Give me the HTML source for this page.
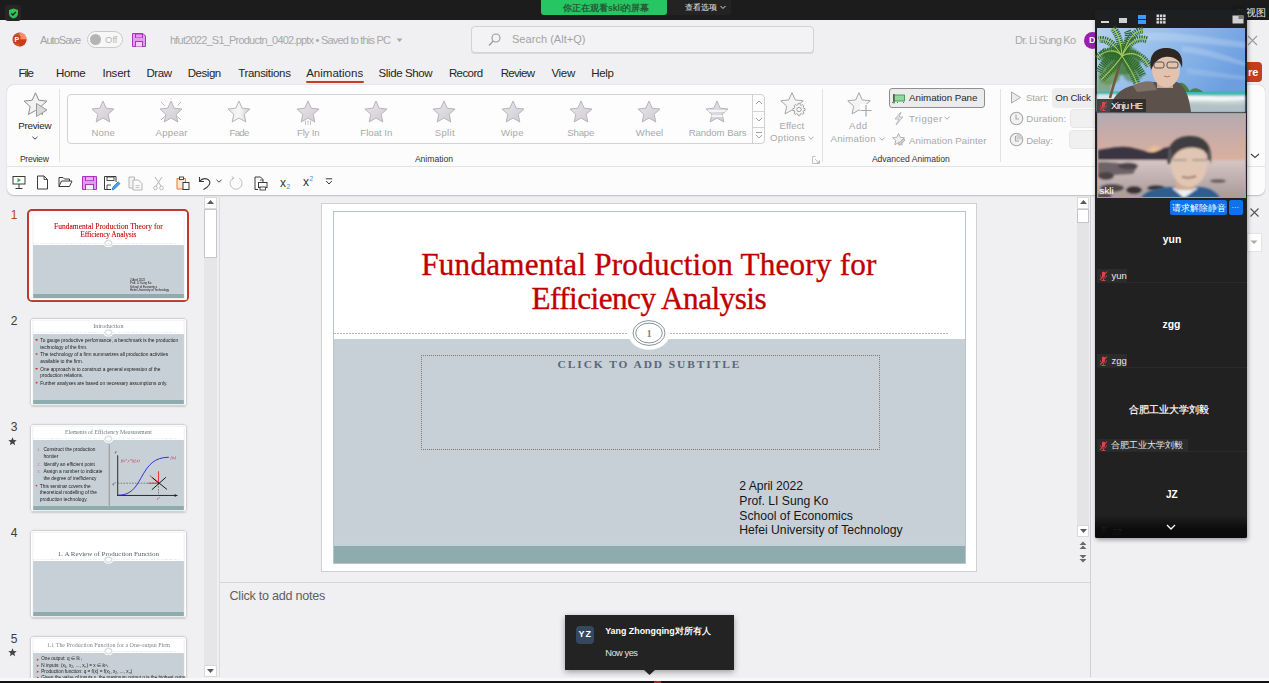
<!DOCTYPE html>
<html><head><meta charset="utf-8"><style>*{margin:0;padding:0;box-sizing:border-box}
html,body{width:1269px;height:683px;overflow:hidden;background:#f0eff2;font-family:"Liberation Sans",sans-serif;position:relative}
.a{position:absolute}
.t{position:absolute;white-space:nowrap}
svg{overflow:visible}
</style></head><body>
<div class="a" style="left:0px;top:0px;width:1269px;height:20px;background:#1c1c1c"></div>
<div class="a" style="left:5px;top:5px;width:16px;height:16px;background:#262626;border-radius:3px"></div>
<svg class="a" style="left:8px;top:8px" width="11" height="11" viewBox="0 0 11 11"><path d="M5.5 0.5 L10 2 L10 5.5 C10 8 8 9.8 5.5 10.6 C3 9.8 1 8 1 5.5 L1 2 Z" fill="#2dc65a"/><path d="M3.2 5.4 L4.9 7 L7.9 3.9" stroke="#1c1c1c" stroke-width="1.3" fill="none"/></svg>
<div class="a" style="left:541px;top:0px;width:126px;height:15px;background:#26c662;border-radius:0 0 3px 3px"></div>
<div class="t" style="left:563.00px;top:3.69px;font-size:8.6px;line-height:8.6px;color:#245c36;font-weight:700;">你正在观看skli的屏幕</div>
<div class="a" style="left:667px;top:0px;width:64px;height:15px;background:#232323;border-radius:0 0 3px 0"></div>
<div class="t" style="left:685.00px;top:4.20px;font-size:8px;line-height:8px;color:#f0f0f0;">查看选项</div>
<svg class="a" style="left:720px;top:5px" width="6" height="5"><path d="M0.5 1 L3 3.5 L5.5 1" stroke="#ddd" stroke-width="1" fill="none"/></svg>
<svg class="a" style="left:12px;top:32px" width="15" height="15" viewBox="0 0 15 15"><circle cx="7.5" cy="7.5" r="7" fill="#d35230"/><path d="M7.5 0.5 A7 7 0 0 1 14.5 7.5 L7.5 7.5 Z" fill="#ff8f6b"/><path d="M7.5 7.5 L14.5 7.5 A7 7 0 0 1 7.5 14.5 Z" fill="#c43e1c"/><rect x="1.5" y="3.5" width="7" height="8" rx="1" fill="#c43e1c"/><text x="2.6" y="10.3" font-size="7" font-weight="700" fill="#fff" font-family="Liberation Sans">P</text></svg>
<div class="t" style="left:40.00px;top:34.65px;font-size:11px;line-height:11px;color:#a4a4a4;letter-spacing:-0.957px;">AutoSave</div>
<div class="a" style="left:87px;top:31px;width:36px;height:17px;border:1px solid #c9c9c9;border-radius:9px;background:#f7f7f7"></div>
<div class="a" style="left:90px;top:34px;width:11px;height:11px;background:#b4b4b4;border-radius:50%"></div>
<div class="t" style="left:105.00px;top:35.42px;font-size:9.5px;line-height:9.5px;color:#b8b8b8;">Off</div>
<svg class="a" style="left:132px;top:33px" width="14" height="14" viewBox="0 0 14 14"><path d="M0.5 0.5 H11 L13.5 3 V13.5 H0.5 Z" fill="#e59bf0" stroke="#a935b8" stroke-width="1"/><rect x="3" y="1" width="8" height="4" fill="#a935b8"/><rect x="4" y="1.5" width="6" height="3" fill="#e59bf0"/><rect x="3" y="8" width="8" height="5.5" fill="#a935b8"/><rect x="4" y="9" width="6" height="4.5" fill="#f4d0f8"/></svg>
<div class="t" style="left:170.00px;top:34.65px;font-size:11px;line-height:11px;color:#a8a8a8;letter-spacing:-0.789px;">hfut2022_S1_Productn_0402.pptx • Saved to this PC</div>
<svg class="a" style="left:396px;top:38px" width="7" height="5"><path d="M0.5 0.5 L6.5 0.5 L3.5 4 Z" fill="#a8a8a8"/></svg>
<div class="a" style="left:471px;top:26px;width:343px;height:27px;border:1px solid #d3d2d6;border-radius:4px;background:#f3f2f4;box-shadow:0 1px 0 #d9d8dc"></div>
<svg class="a" style="left:488px;top:33px" width="13" height="14" viewBox="0 0 13 14"><circle cx="8" cy="5" r="4" stroke="#9a9a9a" stroke-width="1.1" fill="none"/><path d="M5.2 8 L1 12.5" stroke="#9a9a9a" stroke-width="1.2"/></svg>
<div class="t" style="left:512.00px;top:33.65px;font-size:11px;line-height:11px;color:#a3a3a3;letter-spacing:0.035px;">Search (Alt+Q)</div>
<div class="t" style="left:1015.00px;top:35.15px;font-size:11px;line-height:11px;color:#a8a8a8;letter-spacing:-0.764px;">Dr. Li Sung Ko</div>
<div class="a" style="left:1084px;top:32px;width:17px;height:17px;background:#9b1fae;border-radius:50%"></div>
<div class="t" style="left:1089.00px;top:36.35px;font-size:9px;line-height:9px;color:#fff;font-weight:700;">D</div>
<svg class="a" style="left:1247px;top:35px" width="11" height="11"><path d="M1 1 L10 10 M10 1 L1 10" stroke="#9c9c9c" stroke-width="1.1"/></svg>
<div class="a" style="left:1238px;top:62px;width:24px;height:20px;background:#c43e1c;border-radius:4px"></div>
<div class="t" style="left:1248.00px;top:66.65px;font-size:11px;line-height:11px;color:#fff;font-weight:700;">re</div>
<div class="t" style="left:18.50px;top:68.22px;font-size:11.5px;line-height:11.5px;color:#262626;letter-spacing:-1.009px;">File</div>
<div class="t" style="left:56.00px;top:68.22px;font-size:11.5px;line-height:11.5px;color:#262626;letter-spacing:-0.361px;">Home</div>
<div class="t" style="left:102.40px;top:68.22px;font-size:11.5px;line-height:11.5px;color:#262626;letter-spacing:-0.192px;">Insert</div>
<div class="t" style="left:146.40px;top:68.22px;font-size:11.5px;line-height:11.5px;color:#262626;letter-spacing:-0.421px;">Draw</div>
<div class="t" style="left:187.80px;top:68.22px;font-size:11.5px;line-height:11.5px;color:#262626;letter-spacing:-0.480px;">Design</div>
<div class="t" style="left:238.20px;top:68.22px;font-size:11.5px;line-height:11.5px;color:#262626;letter-spacing:-0.312px;">Transitions</div>
<div class="t" style="left:306.20px;top:68.22px;font-size:11.5px;line-height:11.5px;color:#262626;letter-spacing:0.012px;">Animations</div>
<div class="t" style="left:378.60px;top:68.22px;font-size:11.5px;line-height:11.5px;color:#262626;letter-spacing:-0.408px;">Slide Show</div>
<div class="t" style="left:448.90px;top:68.22px;font-size:11.5px;line-height:11.5px;color:#262626;letter-spacing:-0.575px;">Record</div>
<div class="t" style="left:500.70px;top:68.22px;font-size:11.5px;line-height:11.5px;color:#262626;letter-spacing:-0.689px;">Review</div>
<div class="t" style="left:551.40px;top:68.22px;font-size:11.5px;line-height:11.5px;color:#262626;letter-spacing:-0.283px;">View</div>
<div class="t" style="left:591.30px;top:68.22px;font-size:11.5px;line-height:11.5px;color:#262626;letter-spacing:-0.352px;">Help</div>
<div class="a" style="left:306px;top:81px;width:58px;height:2px;background:#c43e1c;border-radius:1px"></div>
<div class="a" style="left:7px;top:85px;width:1258px;height:110px;background:#fcfcfc;border-radius:7px;box-shadow:0 0.5px 1.5px rgba(0,0,0,0.22)"></div>
<div class="a" style="left:7px;top:166px;width:1258px;height:1px;background:#e3e3e3"></div>
<svg class="a" style="left:23px;top:92px;" width="26" height="26" viewBox="0 0 26 26"><polygon points="12.50,0.80 15.82,8.24 23.91,9.09 17.86,14.54 19.55,22.51 12.50,18.44 5.45,22.51 7.14,14.54 1.09,9.09 9.18,8.24" fill="#f2f2f2" stroke="#8d8d8d" stroke-width="1" stroke-linejoin="round"/><path d="M13.5 11.5 L24 18 L13.5 24.5 Z" fill="#d9d9d9" stroke="#9a9a9a" stroke-width="1" stroke-linejoin="round"/></svg>
<div class="t" style="left:18.20px;top:121.27px;font-size:9.8px;line-height:9.8px;color:#262626;letter-spacing:-0.248px;">Preview</div>
<svg class="a" style="left:32px;top:136px;" width="6" height="4" viewBox="0 0 6 4"><path d="M0.5 0.8 L3 3.2 L5.5 0.8" stroke="#444" stroke-width="1" fill="none"/></svg>
<div class="t" style="left:19.90px;top:154.99px;font-size:8.6px;line-height:8.6px;color:#333;letter-spacing:-0.269px;">Preview</div>
<div class="a" style="left:59px;top:89px;width:1px;height:73px;background:#e2e2e2"></div>
<div class="a" style="left:67px;top:94px;width:698px;height:50px;border:1px solid #d2d2d2;border-radius:4px;background:#fdfdfd"></div>
<div class="a" style="left:752px;top:94px;width:1px;height:50px;background:#d2d2d2"></div>
<div class="a" style="left:752px;top:111px;width:13px;height:1px;background:#d2d2d2"></div>
<div class="a" style="left:752px;top:127px;width:13px;height:1px;background:#d2d2d2"></div>
<svg class="a" style="left:754px;top:98px;" width="10" height="10" viewBox="0 0 10 10"><path d="M2 6 L5 3 L8 6" stroke="#9a9a9a" stroke-width="0.9" fill="none"/></svg>
<svg class="a" style="left:754px;top:114px;" width="10" height="10" viewBox="0 0 10 10"><path d="M2 4 L5 7 L8 4" stroke="#9a9a9a" stroke-width="0.9" fill="none"/></svg>
<svg class="a" style="left:754px;top:130px;" width="10" height="10" viewBox="0 0 10 10"><path d="M2 2.5 H8 M2 5 L5 8 L8 5" stroke="#9a9a9a" stroke-width="0.9" fill="none"/></svg>
<svg class="a" style="left:89px;top:98px;" width="28" height="28" viewBox="0 0 28 28"><defs><linearGradient id="sg" x1="0" y1="0" x2="1" y2="1"><stop offset="0" stop-color="#e9e7eb"/><stop offset="1" stop-color="#cfcbd1"/></linearGradient></defs><polygon points="14.00,3.00 17.20,10.19 25.03,11.02 19.19,16.28 20.82,23.98 14.00,20.05 7.18,23.98 8.81,16.28 2.97,11.02 10.80,10.19" fill="url(#sg)" stroke="#b9b5bb" stroke-width="1" stroke-linejoin="round"/></svg>
<div class="t" style="left:91.40px;top:127.54px;font-size:9.6px;line-height:9.6px;color:#a9a9a9;letter-spacing:0.182px;">None</div>
<svg class="a" style="left:157.2px;top:98px;" width="28" height="28" viewBox="0 0 28 28"><defs><linearGradient id="sg" x1="0" y1="0" x2="1" y2="1"><stop offset="0" stop-color="#e9e7eb"/><stop offset="1" stop-color="#cfcbd1"/></linearGradient></defs><polygon points="14.00,3.00 17.20,10.19 25.03,11.02 19.19,16.28 20.82,23.98 14.00,20.05 7.18,23.98 8.81,16.28 2.97,11.02 10.80,10.19" fill="url(#sg)" stroke="#b9b5bb" stroke-width="1" stroke-linejoin="round"/><line x1="4" y1="4" x2="7.5" y2="7.5" stroke="#bdb9bf" stroke-width="1"/><line x1="24" y1="4" x2="20.5" y2="7.5" stroke="#bdb9bf" stroke-width="1"/><line x1="4" y1="22" x2="7.5" y2="18.5" stroke="#bdb9bf" stroke-width="1"/><line x1="24" y1="22" x2="20.5" y2="18.5" stroke="#bdb9bf" stroke-width="1"/><line x1="14" y1="0.5" x2="14" y2="1.5" stroke="#bdb9bf" stroke-width="1"/></svg>
<div class="t" style="left:155.60px;top:127.54px;font-size:9.6px;line-height:9.6px;color:#a9a9a9;letter-spacing:0.168px;">Appear</div>
<svg class="a" style="left:225.4px;top:98px;" width="28" height="28" viewBox="0 0 28 28"><defs><linearGradient id="sg" x1="0" y1="0" x2="1" y2="1"><stop offset="0" stop-color="#e9e7eb"/><stop offset="1" stop-color="#cfcbd1"/></linearGradient></defs><defs><linearGradient id="sf" x1="0" y1="0" x2="1" y2="0"><stop offset="0" stop-color="#ece9ee"/><stop offset="0.5" stop-color="#f6f5f7"/><stop offset="1" stop-color="#d2ced4"/></linearGradient></defs><polygon points="14.00,3.00 17.20,10.19 25.03,11.02 19.19,16.28 20.82,23.98 14.00,20.05 7.18,23.98 8.81,16.28 2.97,11.02 10.80,10.19" fill="url(#sf)" stroke="#b9b5bb" stroke-width="1" stroke-linejoin="round"/></svg>
<div class="t" style="left:229.50px;top:127.54px;font-size:9.6px;line-height:9.6px;color:#a9a9a9;letter-spacing:-0.693px;">Fade</div>
<svg class="a" style="left:294px;top:98px;" width="28" height="28" viewBox="0 0 28 28"><defs><linearGradient id="sg" x1="0" y1="0" x2="1" y2="1"><stop offset="0" stop-color="#e9e7eb"/><stop offset="1" stop-color="#cfcbd1"/></linearGradient></defs><polygon points="14.00,3.00 17.20,10.19 25.03,11.02 19.19,16.28 20.82,23.98 14.00,20.05 7.18,23.98 8.81,16.28 2.97,11.02 10.80,10.19" fill="url(#sg)" stroke="#b9b5bb" stroke-width="1" stroke-linejoin="round"/><line x1="11.5" y1="22.5" x2="11.5" y2="27" stroke="#c2bec4" stroke-width="0.9"/><line x1="14" y1="22.5" x2="14" y2="27" stroke="#c2bec4" stroke-width="0.9"/><line x1="16.5" y1="22.5" x2="16.5" y2="27" stroke="#c2bec4" stroke-width="0.9"/></svg>
<div class="t" style="left:297.00px;top:127.54px;font-size:9.6px;line-height:9.6px;color:#a9a9a9;letter-spacing:-0.194px;">Fly In</div>
<svg class="a" style="left:361.8px;top:98px;" width="28" height="28" viewBox="0 0 28 28"><defs><linearGradient id="sg" x1="0" y1="0" x2="1" y2="1"><stop offset="0" stop-color="#e9e7eb"/><stop offset="1" stop-color="#cfcbd1"/></linearGradient></defs><polygon points="14.00,3.00 17.20,10.19 25.03,11.02 19.19,16.28 20.82,23.98 14.00,20.05 7.18,23.98 8.81,16.28 2.97,11.02 10.80,10.19" fill="url(#sg)" stroke="#b9b5bb" stroke-width="1" stroke-linejoin="round"/></svg>
<div class="t" style="left:360.30px;top:127.54px;font-size:9.6px;line-height:9.6px;color:#a9a9a9;letter-spacing:0.012px;">Float In</div>
<svg class="a" style="left:430px;top:98px;" width="28" height="28" viewBox="0 0 28 28"><defs><linearGradient id="sg" x1="0" y1="0" x2="1" y2="1"><stop offset="0" stop-color="#e9e7eb"/><stop offset="1" stop-color="#cfcbd1"/></linearGradient></defs><polygon points="14.00,3.00 17.20,10.19 25.03,11.02 19.19,16.28 20.82,23.98 14.00,20.05 7.18,23.98 8.81,16.28 2.97,11.02 10.80,10.19" fill="url(#sg)" stroke="#b9b5bb" stroke-width="1" stroke-linejoin="round"/></svg>
<div class="t" style="left:434.80px;top:127.54px;font-size:9.6px;line-height:9.6px;color:#a9a9a9;letter-spacing:0.282px;">Split</div>
<svg class="a" style="left:498.6px;top:98px;" width="28" height="28" viewBox="0 0 28 28"><defs><linearGradient id="sg" x1="0" y1="0" x2="1" y2="1"><stop offset="0" stop-color="#e9e7eb"/><stop offset="1" stop-color="#cfcbd1"/></linearGradient></defs><polygon points="14.00,3.00 17.20,10.19 25.03,11.02 19.19,16.28 20.82,23.98 14.00,20.05 7.18,23.98 8.81,16.28 2.97,11.02 10.80,10.19" fill="url(#sg)" stroke="#b9b5bb" stroke-width="1" stroke-linejoin="round"/></svg>
<div class="t" style="left:501.00px;top:127.54px;font-size:9.6px;line-height:9.6px;color:#a9a9a9;letter-spacing:0.210px;">Wipe</div>
<svg class="a" style="left:566.8px;top:98px;" width="28" height="28" viewBox="0 0 28 28"><defs><linearGradient id="sg" x1="0" y1="0" x2="1" y2="1"><stop offset="0" stop-color="#e9e7eb"/><stop offset="1" stop-color="#cfcbd1"/></linearGradient></defs><polygon points="14.00,3.00 17.20,10.19 25.03,11.02 19.19,16.28 20.82,23.98 14.00,20.05 7.18,23.98 8.81,16.28 2.97,11.02 10.80,10.19" fill="url(#sg)" stroke="#b9b5bb" stroke-width="1" stroke-linejoin="round"/></svg>
<div class="t" style="left:567.20px;top:127.54px;font-size:9.6px;line-height:9.6px;color:#a9a9a9;letter-spacing:-0.141px;">Shape</div>
<svg class="a" style="left:635px;top:98px;" width="28" height="28" viewBox="0 0 28 28"><defs><linearGradient id="sg" x1="0" y1="0" x2="1" y2="1"><stop offset="0" stop-color="#e9e7eb"/><stop offset="1" stop-color="#cfcbd1"/></linearGradient></defs><polygon points="14.00,3.00 17.20,10.19 25.03,11.02 19.19,16.28 20.82,23.98 14.00,20.05 7.18,23.98 8.81,16.28 2.97,11.02 10.80,10.19" fill="url(#sg)" stroke="#b9b5bb" stroke-width="1" stroke-linejoin="round"/></svg>
<div class="t" style="left:635.80px;top:127.54px;font-size:9.6px;line-height:9.6px;color:#a9a9a9;letter-spacing:0.048px;">Wheel</div>
<svg class="a" style="left:703.2px;top:98px;" width="28" height="28" viewBox="0 0 28 28"><defs><linearGradient id="sg" x1="0" y1="0" x2="1" y2="1"><stop offset="0" stop-color="#e9e7eb"/><stop offset="1" stop-color="#cfcbd1"/></linearGradient></defs><polygon points="14.00,3.00 17.20,10.19 25.03,11.02 19.19,16.28 20.82,23.98 14.00,20.05 7.18,23.98 8.81,16.28 2.97,11.02 10.80,10.19" fill="url(#sg)" stroke="#b9b5bb" stroke-width="1" stroke-linejoin="round"/><clipPath id="cpb"><polygon points="14.00,3.00 17.20,10.19 25.03,11.02 19.19,16.28 20.82,23.98 14.00,20.05 7.18,23.98 8.81,16.28 2.97,11.02 10.80,10.19"/></clipPath><g clip-path="url(#cpb)"><rect x="0" y="12" width="28" height="2" fill="#f4f3f5"/><rect x="0" y="17" width="28" height="2" fill="#f4f3f5"/></g></svg>
<div class="t" style="left:688.70px;top:127.54px;font-size:9.6px;line-height:9.6px;color:#a9a9a9;letter-spacing:-0.069px;">Random Bars</div>
<svg class="a" style="left:780px;top:92px;" width="26" height="25" viewBox="0 0 26 25"><polygon points="12.00,0.60 15.26,7.91 23.22,8.75 17.27,14.11 18.94,21.95 12.00,17.95 5.06,21.95 6.73,14.11 0.78,8.75 8.74,7.91" fill="#f4f4f4" stroke="#a8a8a8" stroke-width="1" stroke-linejoin="round"/><polygon points="25.20,17.50 25.15,18.31 23.64,18.74 23.43,19.34 23.16,19.90 23.92,21.27 23.38,21.88 22.77,22.42 21.40,21.66 20.84,21.93 20.24,22.14 19.81,23.65 19.00,23.70 18.19,23.65 17.76,22.14 17.16,21.93 16.60,21.66 15.23,22.42 14.62,21.88 14.08,21.27 14.84,19.90 14.57,19.34 14.36,18.74 12.85,18.31 12.80,17.50 12.85,16.69 14.36,16.26 14.57,15.66 14.84,15.10 14.08,13.73 14.62,13.12 15.23,12.58 16.60,13.34 17.16,13.07 17.76,12.86 18.19,11.35 19.00,11.30 19.81,11.35 20.24,12.86 20.84,13.07 21.40,13.34 22.77,12.58 23.38,13.12 23.92,13.73 23.16,15.10 23.43,15.66 23.64,16.26 25.15,16.69" fill="#f6f6f6" stroke="#a4a4a4" stroke-width="1" stroke-linejoin="round"/><circle cx="19" cy="17.5" r="2.2" fill="none" stroke="#a4a4a4" stroke-width="1"/></svg>
<div class="t" style="left:779.60px;top:120.74px;font-size:9.6px;line-height:9.6px;color:#a9a9a9;letter-spacing:0.065px;">Effect</div>
<div class="t" style="left:770.00px;top:133.04px;font-size:9.6px;line-height:9.6px;color:#a9a9a9;letter-spacing:0.320px;">Options</div>
<svg class="a" style="left:808px;top:136px;" width="6" height="4" viewBox="0 0 6 4"><path d="M0.5 0.8 L3 3.2 L5.5 0.8" stroke="#aaa" stroke-width="1" fill="none"/></svg>
<svg class="a" style="left:812px;top:156px;" width="8" height="8" viewBox="0 0 8 8"><path d="M0.5 0.5 H3.5 M0.5 0.5 V7.5 H7.5 V4.5 M3 3 L7 7 M7 4.5 V7 H4.5" stroke="#b0b0b0" stroke-width="0.8" fill="none"/></svg>
<div class="t" style="left:414.90px;top:155.09px;font-size:8.6px;line-height:8.6px;color:#333;letter-spacing:-0.018px;">Animation</div>
<div class="a" style="left:822px;top:89px;width:1px;height:73px;background:#e2e2e2"></div>
<svg class="a" style="left:847px;top:92px;" width="26" height="26" viewBox="0 0 26 26"><polygon points="12.00,0.60 15.26,7.91 23.22,8.75 17.27,14.11 18.94,21.95 12.00,17.95 5.06,21.95 6.73,14.11 0.78,8.75 8.74,7.91" fill="#f4f4f4" stroke="#a8a8a8" stroke-width="1" stroke-linejoin="round"/><rect x="13" y="12" width="12" height="12" fill="#fcfcfc"/><path d="M19 13 V24.5 M13.5 18.5 H24.5" stroke="#a8a8a8" stroke-width="1.2"/></svg>
<div class="t" style="left:849.10px;top:120.64px;font-size:9.6px;line-height:9.6px;color:#a9a9a9;letter-spacing:0.411px;">Add</div>
<div class="t" style="left:830.50px;top:133.74px;font-size:9.6px;line-height:9.6px;color:#a9a9a9;letter-spacing:0.289px;">Animation</div>
<svg class="a" style="left:879px;top:137px;" width="6" height="4" viewBox="0 0 6 4"><path d="M0.5 0.8 L3 3.2 L5.5 0.8" stroke="#aaa" stroke-width="1" fill="none"/></svg>
<div class="a" style="left:888.5px;top:87.5px;width:96px;height:20px;background:#ebebeb;border:1px solid #8f8f8f;border-radius:3px"></div>
<svg class="a" style="left:891px;top:93px;" width="15" height="11" viewBox="0 0 15 11"><rect x="2.5" y="2" width="11" height="6" fill="#92d6a0" stroke="#3a9a4c" stroke-width="0.9"/><path d="M3 1 V10.5" stroke="#333" stroke-width="1"/><path d="M1 9.5 H2 M6 9.5 H7 M12 9.5 H13" stroke="#3a9a4c" stroke-width="1"/></svg>
<div class="t" style="left:909.10px;top:93.37px;font-size:9.8px;line-height:9.8px;color:#262626;letter-spacing:-0.068px;">Animation Pane</div>
<svg class="a" style="left:892px;top:111px;" width="13" height="15" viewBox="0 0 13 15"><path d="M9 1 L3 8 H7 L4 14 L11 6 H7 Z" fill="#e8e8e8" stroke="#b4b4b4" stroke-width="0.9" stroke-linejoin="round"/></svg>
<div class="t" style="left:909.10px;top:114.44px;font-size:9.6px;line-height:9.6px;color:#a9a9a9;letter-spacing:0.492px;">Trigger</div>
<svg class="a" style="left:944px;top:116px;" width="6" height="4" viewBox="0 0 6 4"><path d="M0.5 0.8 L3 3.2 L5.5 0.8" stroke="#aaa" stroke-width="1" fill="none"/></svg>
<svg class="a" style="left:892px;top:133px;" width="14" height="14" viewBox="0 0 14 14"><polygon points="6.50,0.50 8.21,4.34 12.40,4.78 9.27,7.60 10.14,11.72 6.50,9.61 2.86,11.72 3.73,7.60 0.60,4.78 4.79,4.34" fill="#f0f0f0" stroke="#aaaaaa" stroke-width="0.9" stroke-linejoin="round"/><path d="M6 11 L12 5.5 L13 7 L8 12.5 Z" fill="#cfcfcf" stroke="#aaaaaa" stroke-width="0.8"/></svg>
<div class="t" style="left:909.10px;top:136.24px;font-size:9.6px;line-height:9.6px;color:#a9a9a9;letter-spacing:0.095px;">Animation Painter</div>
<div class="t" style="left:871.90px;top:155.29px;font-size:8.6px;line-height:8.6px;color:#333;letter-spacing:-0.030px;">Advanced Animation</div>
<div class="a" style="left:1000px;top:89px;width:1px;height:73px;background:#e2e2e2"></div>
<svg class="a" style="left:1010px;top:91px;" width="12" height="13" viewBox="0 0 12 13"><path d="M1.5 1 L10.5 6.5 L1.5 12 Z" fill="#ececec" stroke="#a8a8a8" stroke-width="1" stroke-linejoin="round"/></svg>
<div class="t" style="left:1025.90px;top:93.44px;font-size:9.6px;line-height:9.6px;color:#a9a9a9;letter-spacing:-0.069px;">Start:</div>
<div class="a" style="left:1052px;top:87.5px;width:60px;height:20px;background:#ededed;border-radius:4px"></div>
<div class="t" style="left:1055.20px;top:93.27px;font-size:9.8px;line-height:9.8px;color:#262626;letter-spacing:-0.178px;">On Click</div>
<svg class="a" style="left:1009px;top:111px;" width="15" height="15" viewBox="0 0 15 15"><circle cx="7.5" cy="7.5" r="6.3" fill="#f2f2f2" stroke="#a8a8a8" stroke-width="1.1"/><path d="M7 3.5 V8 H10" stroke="#a8a8a8" stroke-width="1.1" fill="none"/></svg>
<div class="t" style="left:1026.20px;top:114.24px;font-size:9.6px;line-height:9.6px;color:#a9a9a9;letter-spacing:0.130px;">Duration:</div>
<div class="a" style="left:1070px;top:109px;width:40px;height:19px;background:#f0f0f0;border:1px solid #e6e6e6;border-radius:4px"></div>
<svg class="a" style="left:1009px;top:132px;" width="15" height="15" viewBox="0 0 15 15"><circle cx="7.5" cy="7.5" r="6.3" fill="#f2f2f2" stroke="#a8a8a8" stroke-width="1.1"/><path d="M7.5 1.5 A6 6 0 0 1 13.5 7.5 L7.5 7.5 Z" fill="#d0d0d0"/><path d="M6.5 4 V9 H10" stroke="#a8a8a8" stroke-width="1.1" fill="none"/></svg>
<div class="t" style="left:1026.20px;top:135.64px;font-size:9.6px;line-height:9.6px;color:#a9a9a9;letter-spacing:-0.101px;">Delay:</div>
<div class="a" style="left:1069px;top:130px;width:40px;height:19px;background:#f0f0f0;border:1px solid #e6e6e6;border-radius:4px"></div>
<svg class="a" style="left:1249.5px;top:153px;" width="10" height="6" viewBox="0 0 10 6"><path d="M1 1 L5 4.5 L9 1" stroke="#444" stroke-width="1.1" fill="none"/></svg>
<svg class="a" style="left:12px;top:175px;" width="14" height="15" viewBox="0 0 14 15"><rect x="1" y="1.5" width="12" height="7.5" fill="#fff" stroke="#3a3a3a" stroke-width="1"/><path d="M5.5 3 L9 5.2 L5.5 7.4 Z" fill="#3aa655"/><path d="M7 9 V13.5 M3.5 13.5 H10.5" stroke="#3a3a3a" stroke-width="1"/></svg>
<svg class="a" style="left:36px;top:175px;" width="13" height="15" viewBox="0 0 13 15"><path d="M1.5 1 H8 L11.5 4.5 V14 H1.5 Z" fill="#fff" stroke="#3a3a3a" stroke-width="1" stroke-linejoin="round"/><path d="M8 1 V4.5 H11.5" stroke="#3a3a3a" stroke-width="0.9" fill="none"/></svg>
<svg class="a" style="left:58px;top:176px;" width="15" height="12" viewBox="0 0 15 12"><path d="M1 10.5 V1.5 H5 L6.5 3 H11.5 V5" fill="none" stroke="#3a3a3a" stroke-width="1"/><path d="M1 10.5 L3.5 5 H14 L11.5 10.5 Z" fill="#fff" stroke="#3a3a3a" stroke-width="1" stroke-linejoin="round"/></svg>
<svg class="a" style="left:81.5px;top:175.5px;" width="15" height="14" viewBox="0 0 15 14"><path d="M0.5 0.5 H14.5 V13.5 H0.5 Z" fill="#e39af0" stroke="#a935b8" stroke-width="1"/><rect x="3" y="0.5" width="9" height="4.5" fill="#a935b8"/><rect x="4" y="1.2" width="7" height="3" fill="#e9b4f3"/><rect x="3" y="8" width="9" height="5.5" fill="#a935b8"/><rect x="4" y="9" width="7" height="4.5" fill="#fbeefd"/></svg>
<svg class="a" style="left:104px;top:175.5px;" width="16" height="15" viewBox="0 0 16 15"><path d="M0.5 0.5 H12 V6 M0.5 0.5 V13.5 H7" fill="#fff" stroke="#3a3a3a" stroke-width="1"/><rect x="3" y="1" width="7" height="3.5" fill="none" stroke="#3a3a3a" stroke-width="0.9"/><path d="M3 13 V9 H7" stroke="#3a3a3a" stroke-width="0.9" fill="none"/><path d="M8 14 L9 11 L14.2 5.8 L16 7.6 L10.8 12.8 Z" fill="#4aa0e6" stroke="#2a7cc8" stroke-width="0.8"/></svg>
<svg class="a" style="left:128px;top:175.5px;" width="15" height="15" viewBox="0 0 15 15"><path d="M1 1 H6.5 L6.5 12 H1 Z" fill="#f3f3f3" stroke="#b4b4b4" stroke-width="1"/><path d="M5 4 H10.5 L14 7.5 V14 H5 Z" fill="#fafafa" stroke="#b4b4b4" stroke-width="1"/><path d="M7.5 9.5 H11.5 M7.5 11.5 H11.5" stroke="#b4b4b4" stroke-width="0.8"/></svg>
<svg class="a" style="left:153px;top:175.5px;" width="11" height="15" viewBox="0 0 11 15"><path d="M2 1 L8 10 M9 1 L3 10" stroke="#b4b4b4" stroke-width="1"/><circle cx="2.5" cy="12" r="1.8" fill="none" stroke="#b4b4b4" stroke-width="0.9"/><circle cx="8.5" cy="12" r="1.8" fill="none" stroke="#b4b4b4" stroke-width="0.9"/></svg>
<svg class="a" style="left:175.5px;top:175.5px;" width="14" height="14" viewBox="0 0 14 14"><path d="M1 2.5 H9.5 V13 H1 Z" fill="#fce6d6" stroke="#e07a2e" stroke-width="1"/><rect x="3.5" y="1" width="4" height="2.5" fill="#fff" stroke="#3a3a3a" stroke-width="0.9"/><rect x="7" y="6.5" width="6" height="7" fill="#fff" stroke="#3a3a3a" stroke-width="1"/></svg>
<svg class="a" style="left:198px;top:175.5px;" width="14" height="14" viewBox="0 0 14 14"><path d="M1.5 1 V5.5 H6" stroke="#3a3a3a" stroke-width="1.1" fill="none"/><path d="M1.8 5.2 C4 2 9.5 1.5 11.5 5 C13 8 10 11 5.5 13.5" stroke="#3a3a3a" stroke-width="1.1" fill="none"/></svg>
<svg class="a" style="left:216px;top:179px;" width="6" height="4" viewBox="0 0 6 4"><path d="M0.5 0.8 L3 3.2 L5.5 0.8" stroke="#444" stroke-width="1" fill="none"/></svg>
<svg class="a" style="left:229px;top:176px;" width="15" height="14" viewBox="0 0 15 14"><path d="M10 2 A6 6 0 1 1 4.5 1.8" stroke="#c2c2c2" stroke-width="1" fill="none"/><path d="M2.8 0.5 L5 2 L3 3.8" stroke="#c2c2c2" stroke-width="1" fill="none"/></svg>
<svg class="a" style="left:254px;top:175.5px;" width="14" height="15" viewBox="0 0 14 15"><path d="M1 1 H6.5 L9 3.5 V6 M1 1 V13.5 H4" fill="#fff" stroke="#3a3a3a" stroke-width="1"/><rect x="4.5" y="6.5" width="8.5" height="5" fill="#fff" stroke="#3a3a3a" stroke-width="1"/><rect x="6" y="11" width="5.5" height="3" fill="#fff" stroke="#3a3a3a" stroke-width="0.9"/><path d="M6 4 H9" stroke="#3a3a3a" stroke-width="0.9"/></svg>
<div class="t" style="left:279.90px;top:177.30px;font-size:12px;line-height:12px;color:#333;">x</div>
<div class="t" style="left:286.50px;top:184.47px;font-size:6.5px;line-height:6.5px;color:#3a8fd6;">2</div>
<div class="t" style="left:302.90px;top:176.30px;font-size:12px;line-height:12px;color:#333;">x</div>
<div class="t" style="left:309.50px;top:175.97px;font-size:6.5px;line-height:6.5px;color:#3a8fd6;">2</div>
<svg class="a" style="left:325px;top:178px;" width="8" height="8" viewBox="0 0 8 8"><path d="M0.8 0.8 H7.2" stroke="#3a3a3a" stroke-width="1"/><path d="M1.2 3 L4 6 L6.8 3" stroke="#3a3a3a" stroke-width="1" fill="none"/></svg>
<div class="t" style="left:10.80px;top:208.80px;font-size:12px;line-height:12px;color:#c43e1c;">1</div>
<div class="t" style="left:10.80px;top:315.30px;font-size:12px;line-height:12px;color:#3c3c3c;">2</div>
<div class="t" style="left:10.80px;top:421.30px;font-size:12px;line-height:12px;color:#3c3c3c;">3</div>
<div class="t" style="left:10.80px;top:527.00px;font-size:12px;line-height:12px;color:#3c3c3c;">4</div>
<div class="t" style="left:10.80px;top:632.80px;font-size:12px;line-height:12px;color:#3c3c3c;">5</div>
<svg class="a" style="left:8px;top:437px;" width="9" height="9" viewBox="0 0 9 9"><polygon points="4.50,0.20 5.66,3.00 8.68,3.24 6.38,5.21 7.09,8.16 4.50,6.58 1.91,8.16 2.62,5.21 0.32,3.24 3.34,3.00" fill="#444"/></svg>
<svg class="a" style="left:8px;top:648px;" width="9" height="9" viewBox="0 0 9 9"><polygon points="4.50,0.20 5.66,3.00 8.68,3.24 6.38,5.21 7.09,8.16 4.50,6.58 1.91,8.16 2.62,5.21 0.32,3.24 3.34,3.00" fill="#444"/></svg>
<div class="a" style="left:27.2px;top:209.1px;width:161.6px;height:93.2px;border:2.5px solid #c0392b;border-radius:5px;background:#fff"></div>
<div class="a" style="left:29.7px;top:211.6px;width:656px;height:369px;transform:scale(0.239);transform-origin:0 0;overflow:hidden"><div class="a" style="left:0px;top:0px;width:656px;height:369px;background:#fff"></div>
<div class="a" style="left:12px;top:8px;width:633px;height:353px;background:linear-gradient(to bottom,#fff 0,#fff 127px,#c8d0d7 127px,#c8d0d7 326px,#c4d3d8 333px,#c2d2d6 334px,#8eacae 334px,#8eacae 353px);border:1px solid #b7c5c8"></div>
<div class="a" style="left:13px;top:130px;width:615px;height:1px;background:repeating-linear-gradient(to right,#aeb6ba 0,#aeb6ba 2px,transparent 2px,transparent 3px)"></div>
<svg class="a" style="left:304px;top:106px" width="48" height="48" viewBox="0 0 48 48"><ellipse cx="24" cy="24" rx="21" ry="16.8" fill="#fff"/><ellipse cx="24" cy="24" rx="16" ry="12.4" fill="#fff" stroke="#84969a" stroke-width="1"/><ellipse cx="24" cy="24" rx="13.3" ry="9.9" fill="none" stroke="#84969a" stroke-width="1"/></svg>
<div class="t" style="left:325.80px;top:126.92px;font-size:9.5px;line-height:9.5px;color:#6f8084;font-family:'Liberation Serif',serif;font-weight:700;">1</div>
<div class="t" style="left:100.30px;top:45.90px;font-size:31.2px;line-height:31.2px;color:#c00000;font-family:'Liberation Serif',serif;letter-spacing:0.192px;-webkit-text-stroke:0.35px #c00000;">Fundamental Production Theory for</div>
<div class="t" style="left:210.40px;top:80.30px;font-size:31.2px;line-height:31.2px;color:#c00000;font-family:'Liberation Serif',serif;letter-spacing:-0.519px;-webkit-text-stroke:0.35px #c00000;">Efficiency Analysis</div>
<div class="t" style="left:418.30px;top:277.33px;font-size:12.2px;line-height:12.2px;color:#161616;letter-spacing:-0.067px;">2 April 2022</div>
<div class="t" style="left:418.30px;top:292.00px;font-size:12.2px;line-height:12.2px;color:#161616;letter-spacing:-0.022px;">Prof. LI Sung Ko</div>
<div class="t" style="left:418.30px;top:306.67px;font-size:12.2px;line-height:12.2px;color:#161616;letter-spacing:-0.012px;">School of Economics</div>
<div class="t" style="left:418.30px;top:321.34px;font-size:12.2px;line-height:12.2px;color:#161616;letter-spacing:-0.010px;">Hefei University of Technology</div>
</div>
<div class="a" style="left:29.7px;top:318px;width:656px;height:369px;transform:scale(0.239);transform-origin:0 0;overflow:hidden"><div class="a" style="left:0px;top:0px;width:656px;height:369px;background:#fff"></div>
<div class="a" style="left:12px;top:8px;width:633px;height:353px;background:linear-gradient(to bottom,#fff 0,#fff 59px,#c8d0d7 59px,#c8d0d7 326px,#c4d3d8 333px,#c2d2d6 334px,#8eacae 334px,#8eacae 353px);border:1px solid #b7c5c8"></div>
<div class="a" style="left:13px;top:61px;width:615px;height:1px;background:repeating-linear-gradient(to right,#aeb6ba 0,#aeb6ba 2px,transparent 2px,transparent 3px)"></div>
<svg class="a" style="left:304px;top:37px" width="48" height="48" viewBox="0 0 48 48"><ellipse cx="24" cy="24" rx="21" ry="16.8" fill="#fff"/><ellipse cx="24" cy="24" rx="16" ry="12.4" fill="#fff" stroke="#84969a" stroke-width="1"/><ellipse cx="24" cy="24" rx="13.3" ry="9.9" fill="none" stroke="#84969a" stroke-width="1"/></svg>
<div class="t" style="left:264.98px;top:19.84px;font-size:25.5px;line-height:25.5px;color:#6e7a7f;font-family:'Liberation Serif',serif;">Introduction</div>
<div class="a" style="left:24px;top:87.5px;width:7px;height:7px;background:#d9342b;border-radius:1px"></div>
<div class="t" style="left:43.00px;top:82.50px;font-size:20px;line-height:20px;color:#202020;">To gauge productive performance, a benchmark is the production</div>
<div class="t" style="left:43.00px;top:111.80px;font-size:20px;line-height:20px;color:#202020;">technology of the firm.</div>
<div class="a" style="left:24px;top:147.3px;width:7px;height:7px;background:#d9342b;border-radius:1px"></div>
<div class="t" style="left:43.00px;top:142.30px;font-size:20px;line-height:20px;color:#202020;">The technology of a firm summarizes all production activities</div>
<div class="t" style="left:43.00px;top:173.30px;font-size:20px;line-height:20px;color:#202020;">available to the firm.</div>
<div class="a" style="left:24px;top:209px;width:7px;height:7px;background:#d9342b;border-radius:1px"></div>
<div class="t" style="left:43.00px;top:204.00px;font-size:20px;line-height:20px;color:#202020;">One approach is to construct a general expression of the</div>
<div class="t" style="left:43.00px;top:229.80px;font-size:20px;line-height:20px;color:#202020;">production relations.</div>
<div class="a" style="left:24px;top:267px;width:7px;height:7px;background:#d9342b;border-radius:1px"></div>
<div class="t" style="left:43.00px;top:262.00px;font-size:20px;line-height:20px;color:#202020;">Further analyses are based on necessary assumptions only.</div>
</div>
<div class="a" style="left:29.5px;top:317.7px;width:157px;height:88.8px;border:1px solid #d2d2d2;border-radius:3px;box-shadow:0 0.5px 1.5px rgba(0,0,0,.15)"></div>
<div class="a" style="left:29.7px;top:424px;width:656px;height:369px;transform:scale(0.239);transform-origin:0 0;overflow:hidden"><div class="a" style="left:0px;top:0px;width:656px;height:369px;background:#fff"></div>
<div class="a" style="left:12px;top:8px;width:633px;height:353px;background:linear-gradient(to bottom,#fff 0,#fff 60px,#c8d0d7 60px,#c8d0d7 326px,#c4d3d8 333px,#c2d2d6 334px,#8eacae 334px,#8eacae 353px);border:1px solid #b7c5c8"></div>
<div class="a" style="left:13px;top:62px;width:615px;height:1px;background:repeating-linear-gradient(to right,#aeb6ba 0,#aeb6ba 2px,transparent 2px,transparent 3px)"></div>
<svg class="a" style="left:304px;top:38px" width="48" height="48" viewBox="0 0 48 48"><ellipse cx="24" cy="24" rx="21" ry="16.8" fill="#fff"/><ellipse cx="24" cy="24" rx="16" ry="12.4" fill="#fff" stroke="#84969a" stroke-width="1"/><ellipse cx="24" cy="24" rx="13.3" ry="9.9" fill="none" stroke="#84969a" stroke-width="1"/></svg>
<div class="t" style="left:146.31px;top:22.05px;font-size:24.4px;line-height:24.4px;color:#6e7a7f;font-family:'Liberation Serif',serif;">Elements of Efficiency Measurement</div>
<div class="a" style="left:330px;top:85px;width:1.5px;height:257px;background:#555"></div>
<div class="t" style="left:30.00px;top:97.15px;font-size:17px;line-height:17px;color:#e0707a;">1.</div>
<div class="t" style="left:56.00px;top:94.60px;font-size:20px;line-height:20px;color:#202020;">Construct the production</div>
<div class="t" style="left:56.00px;top:125.00px;font-size:20px;line-height:20px;color:#202020;">frontier</div>
<div class="t" style="left:30.00px;top:159.55px;font-size:17px;line-height:17px;color:#e0707a;">2.</div>
<div class="t" style="left:56.00px;top:157.00px;font-size:20px;line-height:20px;color:#202020;">Identify an efficient point</div>
<div class="t" style="left:30.00px;top:191.55px;font-size:17px;line-height:17px;color:#e0707a;">3.</div>
<div class="t" style="left:56.00px;top:189.00px;font-size:20px;line-height:20px;color:#202020;">Assign a number to indicate</div>
<div class="t" style="left:56.00px;top:217.00px;font-size:20px;line-height:20px;color:#202020;">the degree of inefficiency</div>
<div class="a" style="left:24px;top:255px;width:6px;height:6px;background:#d9342b"></div>
<div class="t" style="left:41.00px;top:249.00px;font-size:20px;line-height:20px;color:#202020;">This seminar covers the</div>
<div class="t" style="left:41.00px;top:277.00px;font-size:20px;line-height:20px;color:#202020;">theoretical modelling of the</div>
<div class="t" style="left:41.00px;top:306.00px;font-size:20px;line-height:20px;color:#202020;">production technology.</div>
<svg class="a" style="left:0;top:0" width="656" height="369" viewBox="0 0 656 369"><path d="M365 299 H617" stroke="#222" stroke-width="4"/><path d="M617 299 L605 293 V305 Z" fill="#222"/><path d="M367 301 V131" stroke="#222" stroke-width="4"/><path d="M367 298 C420 298 440 270 465 225 C495 170 520 140 581 139" stroke="#2a2ad8" stroke-width="4" fill="none"/><path d="M367 247.7 H537.7 M537.7 247.7 V299" stroke="#444" stroke-width="2.5" stroke-dasharray="7 5"/><path d="M537.7 247.7 L495 247.7 M537.7 247.7 L537.7 198 M537.7 247.7 L501 215" stroke="#e83030" stroke-width="4"/><path d="M510 275 L568.6 223 M512 224.7 L573 273.6" stroke="#111" stroke-width="4"/><text x="380" y="160" font-size="17" fill="#c03060" font-family="Liberation Serif" font-style="italic">f(x*,z*)(f,x)</text><text x="588" y="145" font-size="17" fill="#c03060" font-family="Liberation Serif" font-style="italic">f(x)</text><text x="355" y="120" font-size="14" fill="#333" font-family="Liberation Serif" font-style="italic">q</text><text x="345" y="255" font-size="14" fill="#333" font-family="Liberation Serif" font-style="italic">q*</text><text x="530" y="320" font-size="14" fill="#c03060" font-family="Liberation Serif" font-style="italic">x*</text></svg>
</div>
<div class="a" style="left:29.5px;top:423.7px;width:157px;height:88.8px;border:1px solid #d2d2d2;border-radius:3px;box-shadow:0 0.5px 1.5px rgba(0,0,0,.15)"></div>
<div class="a" style="left:29.7px;top:530px;width:656px;height:369px;transform:scale(0.239);transform-origin:0 0;overflow:hidden"><div class="a" style="left:0px;top:0px;width:656px;height:369px;background:#fff"></div>
<div class="a" style="left:12px;top:8px;width:633px;height:353px;background:linear-gradient(to bottom,#fff 0,#fff 122px,#c8d0d7 122px,#c8d0d7 326px,#c4d3d8 333px,#c2d2d6 334px,#8eacae 334px,#8eacae 353px);border:1px solid #b7c5c8"></div>
<div class="a" style="left:13px;top:124px;width:615px;height:1px;background:repeating-linear-gradient(to right,#aeb6ba 0,#aeb6ba 2px,transparent 2px,transparent 3px)"></div>
<svg class="a" style="left:304px;top:100px" width="48" height="48" viewBox="0 0 48 48"><ellipse cx="24" cy="24" rx="21" ry="16.8" fill="#fff"/><ellipse cx="24" cy="24" rx="16" ry="12.4" fill="#fff" stroke="#84969a" stroke-width="1"/><ellipse cx="24" cy="24" rx="13.3" ry="9.9" fill="none" stroke="#84969a" stroke-width="1"/></svg>
<div class="t" style="left:116.40px;top:83.68px;font-size:29.3px;line-height:29.3px;color:#555f66;font-family:'Liberation Serif',serif;">1. A Review of Production Function</div>
</div>
<div class="a" style="left:29.5px;top:529.7px;width:157px;height:88.8px;border:1px solid #d2d2d2;border-radius:3px;box-shadow:0 0.5px 1.5px rgba(0,0,0,.15)"></div>
<div class="a" style="left:29.7px;top:636px;width:656px;height:369px;transform:scale(0.239);transform-origin:0 0;overflow:hidden"><div class="a" style="left:0px;top:0px;width:656px;height:369px;background:#fff"></div>
<div class="a" style="left:12px;top:8px;width:633px;height:353px;background:linear-gradient(to bottom,#fff 0,#fff 61px,#c8d0d7 61px,#c8d0d7 326px,#c4d3d8 333px,#c2d2d6 334px,#8eacae 334px,#8eacae 353px);border:1px solid #b7c5c8"></div>
<div class="a" style="left:13px;top:63px;width:615px;height:1px;background:repeating-linear-gradient(to right,#aeb6ba 0,#aeb6ba 2px,transparent 2px,transparent 3px)"></div>
<svg class="a" style="left:304px;top:39px" width="48" height="48" viewBox="0 0 48 48"><ellipse cx="24" cy="24" rx="21" ry="16.8" fill="#fff"/><ellipse cx="24" cy="24" rx="16" ry="12.4" fill="#fff" stroke="#84969a" stroke-width="1"/><ellipse cx="24" cy="24" rx="13.3" ry="9.9" fill="none" stroke="#84969a" stroke-width="1"/></svg>
<div class="t" style="left:70.62px;top:23.25px;font-size:25px;line-height:25px;color:#7b868b;font-family:'Liberation Serif',serif;">1.1 The Production Function for a One-output Firm</div>
<div class="t" style="left:26.00px;top:87.50px;font-size:18px;line-height:18px;color:#d9342b;">➤</div>
<div class="t" style="left:47.00px;top:86.22px;font-size:19.5px;line-height:19.5px;color:#202020;">One output:  q ∈ ℝ₊</div>
<div class="t" style="left:26.00px;top:113.50px;font-size:18px;line-height:18px;color:#d9342b;">➤</div>
<div class="t" style="left:47.00px;top:112.23px;font-size:19.5px;line-height:19.5px;color:#202020;">N inputs:  (x₁, x₂, ..., xₙ) = x ∈ ℝⁿ₊</div>
<div class="t" style="left:26.00px;top:140.20px;font-size:18px;line-height:18px;color:#d9342b;">➤</div>
<div class="t" style="left:47.00px;top:138.93px;font-size:19.5px;line-height:19.5px;color:#202020;">Production function:  q = f(x) = f(x₁, x₂, ..., xₙ)</div>
<div class="t" style="left:26.00px;top:165.30px;font-size:18px;line-height:18px;color:#d9342b;">➤</div>
<div class="t" style="left:47.00px;top:164.03px;font-size:19.5px;line-height:19.5px;color:#202020;">Given the value of inputs x, the maximum output q is the highest output</div>
</div>
<div class="a" style="left:29.5px;top:635.7px;width:157px;height:88.8px;border:1px solid #d2d2d2;border-radius:3px;box-shadow:0 0.5px 1.5px rgba(0,0,0,.15)"></div>
<div class="a" style="left:204px;top:196.5px;width:13px;height:480px;background:#e6e6e8"></div>
<div class="a" style="left:204px;top:196.5px;width:13px;height:12px;background:#fff;border:1px solid #d9d9d9"></div>
<svg class="a" style="left:206px;top:199px;" width="9" height="6" viewBox="0 0 9 6"><path d="M1 5 L4.5 1 L8 5 Z" fill="#5a5a5a"/></svg>
<div class="a" style="left:204px;top:208.5px;width:13px;height:49px;background:#fff;border:1px solid #c6c6c6"></div>
<div class="a" style="left:204px;top:664.5px;width:13px;height:12px;background:#fff;border:1px solid #d9d9d9"></div>
<svg class="a" style="left:206px;top:668px;" width="9" height="6" viewBox="0 0 9 6"><path d="M1 1 L4.5 5 L8 1 Z" fill="#5a5a5a"/></svg>
<div class="a" style="left:219px;top:195px;width:1px;height:482px;background:#dcdcdc"></div>
<div class="a" style="left:321px;top:203px;width:656px;height:369px;overflow:hidden"><div class="a" style="left:0px;top:0px;width:656px;height:369px;background:#fff;border:1px solid #d0d0d0"></div>
<div class="a" style="left:12px;top:8px;width:633px;height:353px;background:linear-gradient(to bottom,#fff 0,#fff 127px,#c8d0d7 127px,#c8d0d7 326px,#c4d3d8 333px,#c2d2d6 334px,#8eacae 334px,#8eacae 353px);border:1px solid #b7c5c8"></div>
<div class="a" style="left:13px;top:130px;width:615px;height:1px;background:repeating-linear-gradient(to right,#aeb6ba 0,#aeb6ba 2px,transparent 2px,transparent 3px)"></div>
<svg class="a" style="left:304px;top:106px" width="48" height="48" viewBox="0 0 48 48"><ellipse cx="24" cy="24" rx="21" ry="16.8" fill="#fff"/><ellipse cx="24" cy="24" rx="16" ry="12.4" fill="#fff" stroke="#84969a" stroke-width="1"/><ellipse cx="24" cy="24" rx="13.3" ry="9.9" fill="none" stroke="#84969a" stroke-width="1"/></svg>
<div class="t" style="left:325.80px;top:126.92px;font-size:9.5px;line-height:9.5px;color:#6f8084;font-family:'Liberation Serif',serif;font-weight:700;">1</div>
<div class="t" style="left:100.30px;top:45.90px;font-size:31.2px;line-height:31.2px;color:#c00000;font-family:'Liberation Serif',serif;letter-spacing:0.192px;-webkit-text-stroke:0.35px #c00000;">Fundamental Production Theory for</div>
<div class="t" style="left:210.40px;top:80.30px;font-size:31.2px;line-height:31.2px;color:#c00000;font-family:'Liberation Serif',serif;letter-spacing:-0.519px;-webkit-text-stroke:0.35px #c00000;">Efficiency Analysis</div>
<div class="a" style="left:99.5px;top:152px;width:459px;height:95px;border:1px dotted #7c7c7c"></div>
<div class="t" style="left:236.60px;top:155.64px;font-size:11.4px;line-height:11.4px;color:#5b6678;font-family:'Liberation Serif',serif;font-weight:700;letter-spacing:1.941px;">CLICK TO ADD SUBTITLE</div>
<div class="t" style="left:418.30px;top:277.33px;font-size:12.2px;line-height:12.2px;color:#161616;letter-spacing:-0.067px;">2 April 2022</div>
<div class="t" style="left:418.30px;top:292.00px;font-size:12.2px;line-height:12.2px;color:#161616;letter-spacing:-0.022px;">Prof. LI Sung Ko</div>
<div class="t" style="left:418.30px;top:306.67px;font-size:12.2px;line-height:12.2px;color:#161616;letter-spacing:-0.012px;">School of Economics</div>
<div class="t" style="left:418.30px;top:321.34px;font-size:12.2px;line-height:12.2px;color:#161616;letter-spacing:-0.010px;">Hefei University of Technology</div>
</div>
<div class="a" style="left:1077px;top:196.5px;width:12px;height:340px;background:#e4e4e6"></div>
<div class="a" style="left:1077px;top:196.5px;width:12px;height:12px;background:#fff;border:1px solid #d9d9d9"></div>
<svg class="a" style="left:1078.5px;top:199px;" width="9" height="6" viewBox="0 0 9 6"><path d="M1 5 L4.5 1 L8 5 Z" fill="#5a5a5a"/></svg>
<div class="a" style="left:1077px;top:208.5px;width:12px;height:14px;background:#fff;border:1px solid #c6c6c6"></div>
<div class="a" style="left:1077px;top:524.5px;width:12px;height:12px;background:#fff;border:1px solid #d9d9d9"></div>
<svg class="a" style="left:1078.5px;top:528px;" width="9" height="6" viewBox="0 0 9 6"><path d="M1 1 L4.5 5 L8 1 Z" fill="#5a5a5a"/></svg>
<svg class="a" style="left:1078px;top:540px;" width="10" height="10" viewBox="0 0 10 10"><path d="M1.5 5 L5 1.5 L8.5 5 Z M1.5 9 L5 5.5 L8.5 9 Z" fill="#6a6a6a"/></svg>
<svg class="a" style="left:1078px;top:554px;" width="10" height="10" viewBox="0 0 10 10"><path d="M1.5 1 L5 4.5 L8.5 1 Z M1.5 5 L5 8.5 L8.5 5 Z" fill="#6a6a6a"/></svg>
<div class="a" style="left:1090px;top:195px;width:1px;height:482px;background:#d0d0d0"></div>
<div class="a" style="left:220px;top:582px;width:870px;height:1px;background:#d6d6d6"></div>
<div class="t" style="left:229.50px;top:589.99px;font-size:12.6px;line-height:12.6px;color:#5f5f5f;letter-spacing:-0.250px;">Click to add notes</div>
<div class="a" style="left:565px;top:615px;width:169px;height:55px;background:#232323;box-shadow:0 2px 6px rgba(0,0,0,.35)"></div>
<svg class="a" style="left:643px;top:669px;" width="13" height="6" viewBox="0 0 13 6"><path d="M0 0 L6.5 6 L13 0 Z" fill="#232323"/></svg>
<div class="a" style="left:576px;top:626px;width:17.5px;height:17.5px;background:#34495f;border-radius:4px"></div>
<div class="t" style="left:578.50px;top:630.35px;font-size:9px;line-height:9px;color:#fff;font-weight:700;letter-spacing:0.998px;">YZ</div>
<div class="t" style="left:605.20px;top:627.13px;font-size:8.9px;line-height:8.9px;color:#fff;font-weight:700;">Yang Zhongqing对所有人</div>
<div class="t" style="left:605.20px;top:649.10px;font-size:9.3px;line-height:9.3px;color:#e2e2e2;letter-spacing:-0.476px;">Now yes</div>
<svg class="a" style="left:1250px;top:208px;" width="9" height="9" viewBox="0 0 9 9"><path d="M0.5 0.5 L8.5 8.5 M8.5 0.5 L0.5 8.5" stroke="#555" stroke-width="1.1"/></svg>
<div class="a" style="left:1247px;top:233px;width:15px;height:19px;background:#fff;border:1px solid #e4e4e4"></div>
<svg class="a" style="left:1250px;top:240px;" width="8" height="5" viewBox="0 0 8 5"><path d="M0.5 0.5 L7.5 0.5 L4 4 Z" fill="#aaa"/></svg>
<div class="a" style="left:1232px;top:5px;width:35px;height:15px;background:#1a1a1a;border-radius:4px"></div>
<div class="t" style="left:1246.00px;top:8.00px;font-size:10px;line-height:10px;color:#e8e8e8;">视图</div>
<div class="a" style="left:1095px;top:10px;width:152px;height:528px;background:#212121;border-radius:3px 3px 2px 2px;box-shadow:1px 2px 4px rgba(0,0,0,.35)"></div>
<div class="a" style="left:1095px;top:10px;width:152px;height:18px;background:#1e1f21;border-radius:3px 3px 0 0"></div>
<div class="a" style="left:1101px;top:21px;width:8px;height:2px;background:#d8d8d8"></div>
<div class="a" style="left:1119px;top:18px;width:8px;height:5px;background:#d0d0d0"></div>
<div class="a" style="left:1138px;top:15px;width:8px;height:3.5px;background:#3d9df3"></div>
<div class="a" style="left:1138px;top:20px;width:8px;height:3.5px;background:#3d9df3"></div>
<svg class="a" style="left:1156px;top:14px;" width="10" height="10" viewBox="0 0 10 10"><rect x="0.5" y="0.5" width="2.5" height="2.5" fill="#d8d8d8"/><rect x="0.5" y="3.8" width="2.5" height="2.5" fill="#d8d8d8"/><rect x="0.5" y="7.1" width="2.5" height="2.5" fill="#d8d8d8"/><rect x="3.8" y="0.5" width="2.5" height="2.5" fill="#d8d8d8"/><rect x="3.8" y="3.8" width="2.5" height="2.5" fill="#d8d8d8"/><rect x="3.8" y="7.1" width="2.5" height="2.5" fill="#d8d8d8"/><rect x="7.1" y="0.5" width="2.5" height="2.5" fill="#d8d8d8"/><rect x="7.1" y="3.8" width="2.5" height="2.5" fill="#d8d8d8"/><rect x="7.1" y="7.1" width="2.5" height="2.5" fill="#d8d8d8"/></svg>
<div class="t" style="left:1236.50px;top:6.40px;font-size:6px;line-height:6px;color:#777;">···</div>
<svg class="a" style="left:1232px;top:15px;" width="12" height="9" viewBox="0 0 12 9"><rect x="0.5" y="0.5" width="11" height="8" fill="#d0d0d0"/><rect x="6.5" y="1" width="4.5" height="3" fill="#7a7a7a"/></svg>
<svg class="a" style="left:1097px;top:28px;" width="148" height="84" viewBox="0 0 148 84"><defs><linearGradient id="sky1" x1="0" y1="0" x2="1" y2="0.4"><stop offset="0" stop-color="#b4d0f0"/><stop offset="0.45" stop-color="#96bdea"/><stop offset="1" stop-color="#6c9ee0"/></linearGradient><filter id="bl1" x="-20%" y="-20%" width="140%" height="140%"><feGaussianBlur stdDeviation="1.2"/></filter><filter id="bl2" x="-20%" y="-20%" width="140%" height="140%"><feGaussianBlur stdDeviation="0.5"/></filter></defs><rect width="148" height="84" fill="url(#sky1)"/><g filter="url(#bl1)" opacity="0.3"><path d="M40 6 C70 2 100 8 148 14 L148 20 C110 16 80 12 40 12 Z" fill="#d6e4f5"/><path d="M85 18 C110 20 130 28 148 34 L148 38 C125 32 105 26 85 24 Z" fill="#cfe0f4"/><path d="M90 40 C110 42 130 46 148 48 L148 52 C125 50 110 48 90 46 Z" fill="#b9d0ee"/></g><rect y="63.5" width="148" height="5" fill="#3db6b2"/><g filter="url(#bl1)"><rect x="0" y="67" width="148" height="17" fill="#c4d2d6"/><path d="M75 68 C100 66 125 70 148 68 L148 72 C120 74 100 72 75 73 Z" fill="#f2f6f7"/><path d="M70 76 C100 74 120 78 148 76 L148 84 L70 84 Z" fill="#b3c1c5"/><path d="M0 66 H20 V84 H0 Z" fill="#dfe6e8"/></g><g filter="url(#bl1)"><ellipse cx="24" cy="32" rx="20" ry="15" fill="#3c7530" opacity="0.8"/><ellipse cx="12" cy="48" rx="11" ry="9" fill="#5f8f3e" opacity="0.75"/><ellipse cx="36" cy="46" rx="10" ry="8" fill="#4c7f36" opacity="0.6"/></g><path d="M13 70 C17 55 22 40 25 28" stroke="#6e5c3e" stroke-width="2.6" fill="none"/><g filter="url(#bl2)"><path d="M25 28 C16 14 8 10 2 12" stroke="#2e6a2a" stroke-width="7" stroke-dasharray="1.2 0.9" fill="none"/><path d="M25 28 C18 20 8 22 0 30" stroke="#2e6a2a" stroke-width="7" stroke-dasharray="1.2 0.9" fill="none"/><path d="M25 28 C32 14 40 8 50 12" stroke="#2e6a2a" stroke-width="7" stroke-dasharray="1.2 0.9" fill="none"/><path d="M25 28 C36 22 46 28 52 38" stroke="#2e6a2a" stroke-width="7" stroke-dasharray="1.2 0.9" fill="none"/><path d="M25 28 C24 14 20 4 16 0" stroke="#2e6a2a" stroke-width="7" stroke-dasharray="1.2 0.9" fill="none"/><path d="M25 28 C20 36 12 44 4 52" stroke="#2e6a2a" stroke-width="7" stroke-dasharray="1.2 0.9" fill="none"/><path d="M25 28 C30 36 36 44 40 56" stroke="#2e6a2a" stroke-width="7" stroke-dasharray="1.2 0.9" fill="none"/><path d="M25 28 C32 8 40 2 46 2" stroke="#2e6a2a" stroke-width="7" stroke-dasharray="1.2 0.9" fill="none"/><path d="M25 28 C14 26 6 34 2 44" stroke="#2e6a2a" stroke-width="7" stroke-dasharray="1.2 0.9" fill="none"/><path d="M25 28 C34 32 42 38 46 48" stroke="#2e6a2a" stroke-width="7" stroke-dasharray="1.2 0.9" fill="none"/><path d="M25 28 C28 18 34 10 30 2" stroke="#2e6a2a" stroke-width="7" stroke-dasharray="1.2 0.9" fill="none"/><path d="M25 28 C18 30 10 28 4 22" stroke="#2e6a2a" stroke-width="7" stroke-dasharray="1.2 0.9" fill="none"/><path d="M25 28 C16 14 8 10 2 12" stroke="#a8c858" stroke-width="1.1" fill="none"/><path d="M25 28 C18 20 8 22 0 30" stroke="#a8c858" stroke-width="1.1" fill="none"/><path d="M25 28 C32 14 40 8 50 12" stroke="#a8c858" stroke-width="1.1" fill="none"/><path d="M25 28 C36 22 46 28 52 38" stroke="#a8c858" stroke-width="1.1" fill="none"/><path d="M25 28 C24 14 20 4 16 0" stroke="#a8c858" stroke-width="1.1" fill="none"/><path d="M25 28 C20 36 12 44 4 52" stroke="#a8c858" stroke-width="1.1" fill="none"/><path d="M25 28 C30 36 36 44 40 56" stroke="#a8c858" stroke-width="1.1" fill="none"/><path d="M25 28 C32 8 40 2 46 2" stroke="#a8c858" stroke-width="1.1" fill="none"/></g><rect x="0" y="52" width="14" height="12" fill="#6d9650" opacity="0.6" filter="url(#bl1)"/><path d="M73 64 C75 57 80 54 85 55 C89 56 91 60 93 64 Z" fill="#4a7f45"/><path d="M92 64 C95 59 101 59 106 64 Z" fill="#50804a"/><g filter="url(#bl2)"><path d="M13 84 C14 70 22 60 38 57 L56 54 L80 54 C88 58 92 68 94 84 Z" fill="#5c514b"/><path d="M36 58 C42 54 52 52 56 54 L60 62 L40 64 Z" fill="#7c7068"/><rect x="60" y="50" width="16" height="10" fill="#c7a590"/><ellipse cx="69" cy="41" rx="14" ry="18.5" fill="#e3c2ae"/><path d="M54 42 C51 26 59 20 69 20 C80 20 87 26 85 40 C83 32 77 28 68 29 C61 30 57 35 54 42 Z" fill="#2e2724"/><rect x="57" y="34" width="10" height="6" rx="2" fill="none" stroke="#555" stroke-width="1"/><rect x="70" y="34" width="11" height="6" rx="2" fill="none" stroke="#555" stroke-width="1"/><path d="M67 48 C69 49 71 49 73 48" stroke="#b07a70" stroke-width="1.2" fill="none"/></g><rect x="0" y="71" width="49" height="13" fill="#2a2a2a" opacity="0.85"/></svg>
<svg class="a" style="left:1099px;top:101px;" width="9" height="10" viewBox="0 0 9 10"><path d="M3 1.5 C3 0.5 6 0.5 6 1.5 V5 C6 6.5 3 6.5 3 5 Z" fill="#e04545"/><path d="M1.5 4.5 C1.5 8 7.5 8 7.5 4.5 M4.5 7.5 V9.5 M2.5 9.5 H6.5" stroke="#e04545" stroke-width="0.9" fill="none"/><path d="M8 0.5 L1 9" stroke="#e04545" stroke-width="1.1"/></svg>
<div class="t" style="left:1111.00px;top:101.17px;font-size:9.8px;line-height:9.8px;color:#fff;letter-spacing:-0.876px;">Xinju HE</div>
<div class="a" style="left:1096.5px;top:112.5px;width:149px;height:85px;border:1px solid #86c03c"></div>
<div class="a" style="left:1097.5px;top:113.5px;width:147px;height:83px;overflow:hidden"><svg class="a" style="left:0px;top:0px;" width="148" height="84" viewBox="0 0 148 84"><defs><linearGradient id="sky2" x1="0" y1="0" x2="0" y2="1"><stop offset="0" stop-color="#b7a9b0"/><stop offset="0.6" stop-color="#deb09c"/><stop offset="1" stop-color="#eeb48e"/></linearGradient><radialGradient id="sun" cx="0.5" cy="0.5" r="0.5"><stop offset="0" stop-color="#ffe9a8"/><stop offset="0.3" stop-color="#f7c48a"/><stop offset="1" stop-color="#f2c6a0" stop-opacity="0"/></radialGradient><linearGradient id="beach" x1="0" y1="0" x2="0" y2="1"><stop offset="0" stop-color="#d6c6c4"/><stop offset="1" stop-color="#a89a9a"/></linearGradient><filter id="bl3" x="-20%" y="-20%" width="140%" height="140%"><feGaussianBlur stdDeviation="0.8"/></filter></defs><rect width="148" height="84" fill="url(#sky2)"/><g filter="url(#bl3)"><circle cx="57" cy="39" r="9" fill="url(#sun)"/><path d="M0 36 C8 35 14 33 22 33 C32 32 42 36 50 38 C56 39 60 37 66 34 L72 33 L72 47 L0 47 Z" fill="#3b3642"/><rect y="46" width="148" height="38" fill="url(#beach)"/><path d="M0 48 C10 47 30 50 40 52 L35 60 L0 62 Z" fill="#6e6468"/><ellipse cx="8" cy="62" rx="8" ry="4" fill="#4b4347"/><ellipse cx="30" cy="52" rx="10" ry="3.5" fill="#4e4548"/><ellipse cx="14" cy="74" rx="12" ry="4" fill="#514749"/><ellipse cx="36" cy="76" rx="8" ry="4" fill="#3a3336"/><ellipse cx="58" cy="74" rx="9" ry="3" fill="#3c3537"/><ellipse cx="6" cy="82" rx="8" ry="3" fill="#5a5052"/><ellipse cx="120" cy="67" rx="8" ry="2" fill="#6a5e60"/></g><g filter="url(#bl3)"><path d="M43 84 C46 78 56 74 72 73 L102 73 C114 74 120 80 122 84 Z" fill="#2f5d8e"/><path d="M74 74 L86 84 L100 74 Z" fill="#eef0f3"/><rect x="78" y="64" width="18" height="12" fill="#d2ad95"/><ellipse cx="91" cy="50" rx="18" ry="23" fill="#e2c6b4"/><path d="M70 50 C67 30 78 22 92 22 C106 22 115 30 113 50 C111 40 106 35 98 34 C88 32 76 36 72 50 Z" fill="#3f3d40"/><path d="M72 46 V36 M111 46 V36" stroke="#5a585b" stroke-width="3"/><path d="M75 46 H89 M94 46 H109" stroke="#777" stroke-width="1.2" fill="none"/><path d="M84 63 C89 64 94 64 98 62" stroke="#8a5a50" stroke-width="1.5" fill="none"/></g></svg>
</div>
<div class="t" style="left:1099.50px;top:186.17px;font-size:9.8px;line-height:9.8px;color:#fff;">skli</div>
<div class="a" style="left:1170px;top:200px;width:57px;height:15px;background:#0e72ed;border-radius:2px"></div>
<div class="t" style="left:1172.00px;top:203.68px;font-size:9.2px;line-height:9.2px;color:#fff;">请求解除静音</div>
<div class="a" style="left:1229px;top:200px;width:14px;height:15px;background:#0e72ed;border-radius:2px"></div>
<div class="t" style="left:1231.50px;top:203.62px;font-size:7.5px;line-height:7.5px;color:#fff;">···</div>
<div class="t" style="left:1162.80px;top:235.16px;font-size:10.4px;line-height:10.4px;color:#fff;font-weight:700;">yun</div>
<div class="a" style="left:1097px;top:269px;width:30px;height:13px;background:#2c2c2c"></div>
<svg class="a" style="left:1099px;top:271px;" width="9" height="10" viewBox="0 0 9 10"><path d="M3 1.5 C3 0.5 6 0.5 6 1.5 V5 C6 6.5 3 6.5 3 5 Z" fill="#e04545"/><path d="M1.5 4.5 C1.5 8 7.5 8 7.5 4.5 M4.5 7.5 V9.5 M2.5 9.5 H6.5" stroke="#e04545" stroke-width="0.9" fill="none"/><path d="M8 0.5 L1 9" stroke="#e04545" stroke-width="1.1"/></svg>
<div class="t" style="left:1111.50px;top:270.62px;font-size:9.5px;line-height:9.5px;color:#e8e8e8;">yun</div>
<div class="a" style="left:1097px;top:282px;width:150px;height:1px;background:#2a2a2a"></div>
<div class="t" style="left:1162.50px;top:320.16px;font-size:10.4px;line-height:10.4px;color:#fff;font-weight:700;">zgg</div>
<div class="a" style="left:1097px;top:354px;width:30px;height:13px;background:#2c2c2c"></div>
<svg class="a" style="left:1099px;top:356px;" width="9" height="10" viewBox="0 0 9 10"><path d="M3 1.5 C3 0.5 6 0.5 6 1.5 V5 C6 6.5 3 6.5 3 5 Z" fill="#e04545"/><path d="M1.5 4.5 C1.5 8 7.5 8 7.5 4.5 M4.5 7.5 V9.5 M2.5 9.5 H6.5" stroke="#e04545" stroke-width="0.9" fill="none"/><path d="M8 0.5 L1 9" stroke="#e04545" stroke-width="1.1"/></svg>
<div class="t" style="left:1111.50px;top:355.62px;font-size:9.5px;line-height:9.5px;color:#e8e8e8;">zgg</div>
<div class="a" style="left:1097px;top:367px;width:150px;height:1px;background:#2a2a2a"></div>
<div class="t" style="left:1128.80px;top:404.63px;font-size:10.2px;line-height:10.2px;color:#fff;-webkit-text-stroke:0.2px #fff;">合肥工业大学刘毅</div>
<div class="a" style="left:1097px;top:439px;width:91px;height:12px;background:#2c2c2c"></div>
<svg class="a" style="left:1099px;top:441px;" width="9" height="10" viewBox="0 0 9 10"><path d="M3 1.5 C3 0.5 6 0.5 6 1.5 V5 C6 6.5 3 6.5 3 5 Z" fill="#e04545"/><path d="M1.5 4.5 C1.5 8 7.5 8 7.5 4.5 M4.5 7.5 V9.5 M2.5 9.5 H6.5" stroke="#e04545" stroke-width="0.9" fill="none"/><path d="M8 0.5 L1 9" stroke="#e04545" stroke-width="1.1"/></svg>
<div class="t" style="left:1111.00px;top:440.92px;font-size:8.8px;line-height:8.8px;color:#e8e8e8;">合肥工业大学刘毅</div>
<div class="a" style="left:1097px;top:451px;width:150px;height:1px;background:#2a2a2a"></div>
<div class="t" style="left:1166.00px;top:489.50px;font-size:10px;line-height:10px;color:#fff;font-weight:700;">JZ</div>
<svg class="a" style="left:1099px;top:526px;" width="9" height="10" viewBox="0 0 9 10"><path d="M3 1.5 C3 0.5 6 0.5 6 1.5 V5 C6 6.5 3 6.5 3 5 Z" fill="#e04545"/><path d="M1.5 4.5 C1.5 8 7.5 8 7.5 4.5 M4.5 7.5 V9.5 M2.5 9.5 H6.5" stroke="#e04545" stroke-width="0.9" fill="none"/><path d="M8 0.5 L1 9" stroke="#e04545" stroke-width="1.1"/></svg>
<div class="t" style="left:1111.50px;top:526.92px;font-size:9.5px;line-height:9.5px;color:#e8e8e8;">JZ</div>
<div class="a" style="left:1095px;top:515px;width:152px;height:23px;background:linear-gradient(to bottom,rgba(10,10,10,0),rgba(10,10,10,.92) 60%,#0a0a0a);border-radius:0 0 2px 2px"></div>
<svg class="a" style="left:1166px;top:524px;" width="10" height="7" viewBox="0 0 10 7"><path d="M1 1 L5 5 L9 1" stroke="#fff" stroke-width="1.3" fill="none"/></svg>
<div class="a" style="left:0px;top:677.7px;width:1269px;height:3px;background:#f8f8f9"></div>
<div class="a" style="left:0px;top:680.5px;width:1269px;height:3px;background:#121212"></div>
<div class="a" style="left:654px;top:681px;width:7px;height:2px;background:#a02828"></div>
</body></html>
